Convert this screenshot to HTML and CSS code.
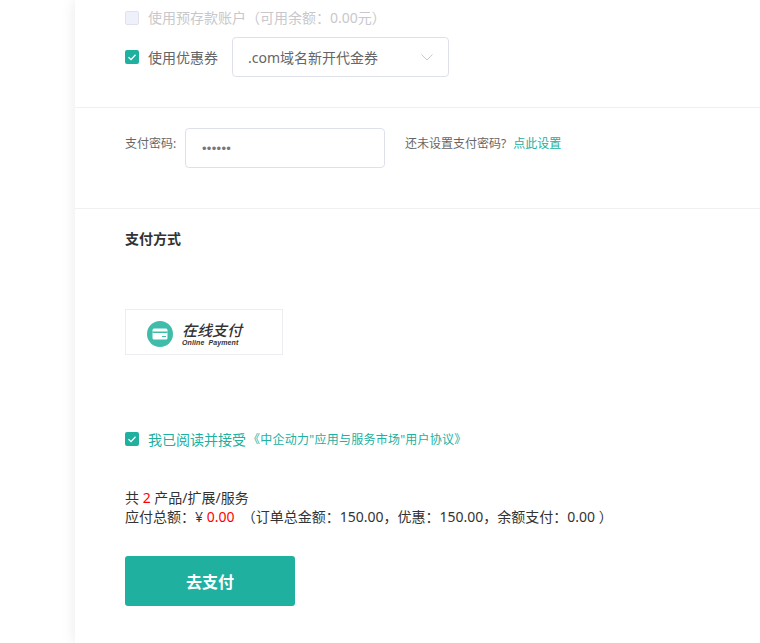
FILE: index.html
```html
<!DOCTYPE html>
<html lang="zh">
<head>
<meta charset="utf-8">
<title>支付</title>
<link rel="stylesheet" href="styles.css">
</head>
<body>
<main class="card">
  <section class="sec sec-balance">
    <div class="check-row disabled">
      <span class="box"></span>
      <span class="balance-text">使用预存款账户（可用余额：0.00元）</span>
    </div>
    <div class="check-row coupon-row">
      <span class="box on"><svg viewBox="0 0 14 14" width="14" height="14"><path d="M3.500 7.200l2.500 2.400 4.500-4.800" fill="none" stroke="#fff" stroke-width="1.300"/></svg></span>
      <span>使用优惠券</span>
      <div class="select">
        <span>.com域名新开代金券</span>
        <svg class="caret" viewBox="0 0 12 7" width="12" height="7"><path d="M.5.5L6 6 11.500.5" fill="none" stroke="#c8cbd6" stroke-width="1"/></svg>
      </div>
    </div>
  </section>
  <section class="sec sec-pwd">
    <span class="pwd-label">支付密码:</span>
    <div class="pwd-input">••••••</div>
    <span class="pwd-hint">还未设置支付密码?<a class="link hint-link">点此设置</a></span>
  </section>
  <section class="sec-pay">
    <h2 class="pay-title">支付方式</h2>
    <div class="pay-card">
      <svg class="pay-icon" viewBox="0 0 26 26" width="26" height="26">
        <circle cx="13" cy="13" r="13" fill="#3fbcaa"/>
        <rect x="5.500" y="7.500" width="15" height="11" rx="1.500" fill="#fff"/>
        <rect x="5.500" y="10.500" width="15" height="1.500" fill="#3fbcaa"/>
        <rect x="15" y="15" width="4" height="1" fill="#3fbcaa"/>
      </svg>
      <div class="pay-text">
        <span class="pay-cn">在线支付</span>
        <span class="pay-en">Online&nbsp; Payment</span>
      </div>
    </div>
    <div class="check-row agree">
      <span class="box on"><svg viewBox="0 0 14 14" width="14" height="14"><path d="M3.500 7.200l2.500 2.400 4.500-4.800" fill="none" stroke="#fff" stroke-width="1.300"/></svg></span>
      <span class="link">我已阅读并接受</span>
      <span class="link small">《中企动力"应用与服务市场"用户协议》</span>
    </div>
    <div class="summary">
      <p>共 <em>2</em> 产品/扩展/服务</p>
      <p>应付总额：¥ <em>0.00</em> &nbsp;（订单总金额：150.00，优惠：150.00，余额支付：0.00 ）</p>
    </div>
    <button class="go" type="button">去支付</button>
  </section>
</main>
</body>
</html>
```
FILE: styles.css
```css
* { box-sizing: border-box; }
html, body { margin: 0; height: 643px; overflow: hidden; background: #fff; }
body { font-family: "Noto Sans", "Noto Sans CJK SC", "Liberation Sans", sans-serif; font-size: 14px; color: #666; }
.card { margin-left: 75px; height: 643px; background: #fff; box-shadow: 0 0 14px rgba(0,0,0,.09); }
.sec { border-bottom: 1px solid #f0f0f3; padding-left: 50px; }
.sec-balance { height: 108px; padding-top: 11px; }
.check-row { display: flex; align-items: center; }
.box { width: 14px; height: 14px; margin-right: 9px; border: 1px solid #dfe2ee; border-radius: 2px; background: #eef1fa; flex: none; display: block; }
.box.on { background: #20b09f; border: 0; }
.box svg { display: block; }
.disabled { color: #c8c8cc; height: 14px; }
.balance-text { margin-top: -2px; }
.coupon-row { margin-top: 12px; height: 40px; }
.select { width: 217px; height: 40px; margin-left: 14px; padding: 0 15px; border: 1px solid #dfe1ea; border-radius: 4px; display: flex; align-items: center; justify-content: space-between; }
.caret { margin-right: 0; }
.sec-pwd { height: 101px; padding-top: 20px; display: flex; align-items: flex-start; font-size: 12px; }
.pwd-label { margin-top: 7px; line-height: 17px; width: 60px; }
.pwd-input { width: 200px; height: 40px; border: 1px solid #dfe1ea; border-radius: 4px; padding-left: 16px; line-height: 40px; font-family: "Liberation Sans", sans-serif; font-size: 13px; letter-spacing: .3px; color: #777; }
.pwd-hint { margin: 7px 0 0 20px; line-height: 17px; }
.hint-link { margin-left: 7px; }
.link { color: #20b09f; }
.sec-pay { padding: 20px 0 0 50px; }
.pay-title { margin: 0; font-size: 14px; line-height: 20px; font-weight: 700; color: #333; }
.pay-card { width: 158px; height: 46px; margin-top: 60px; border: 1px solid #ecedf3; display: flex; align-items: center; padding-left: 21px; }
.pay-icon { margin-top: 3px; }
.pay-text { margin: 4px 0 0 9px; display: flex; flex-direction: column; color: #333; }
.pay-cn { font-size: 15px; line-height: 17px; font-weight: 500; font-style: italic; }
.pay-en { font-family: "Liberation Sans", sans-serif; font-size: 7px; line-height: 8px; font-weight: 700; font-style: italic; letter-spacing: .1px; }
.agree { margin-top: 77px; height: 14px; }
.small { font-size: 12px; margin-left: 2px; letter-spacing: .25px; }
.summary { margin-top: 42px; color: #333; font-size: 14px; line-height: 19px; }
.summary p { margin: 0; }
.summary em { font-style: normal; color: #f00; }
.go { display: block; width: 170px; height: 50px; margin-top: 30px; border: 0; border-radius: 3px; background: #20b09f; color: #fff; font: 700 16px "Noto Sans CJK SC", sans-serif; }
```
